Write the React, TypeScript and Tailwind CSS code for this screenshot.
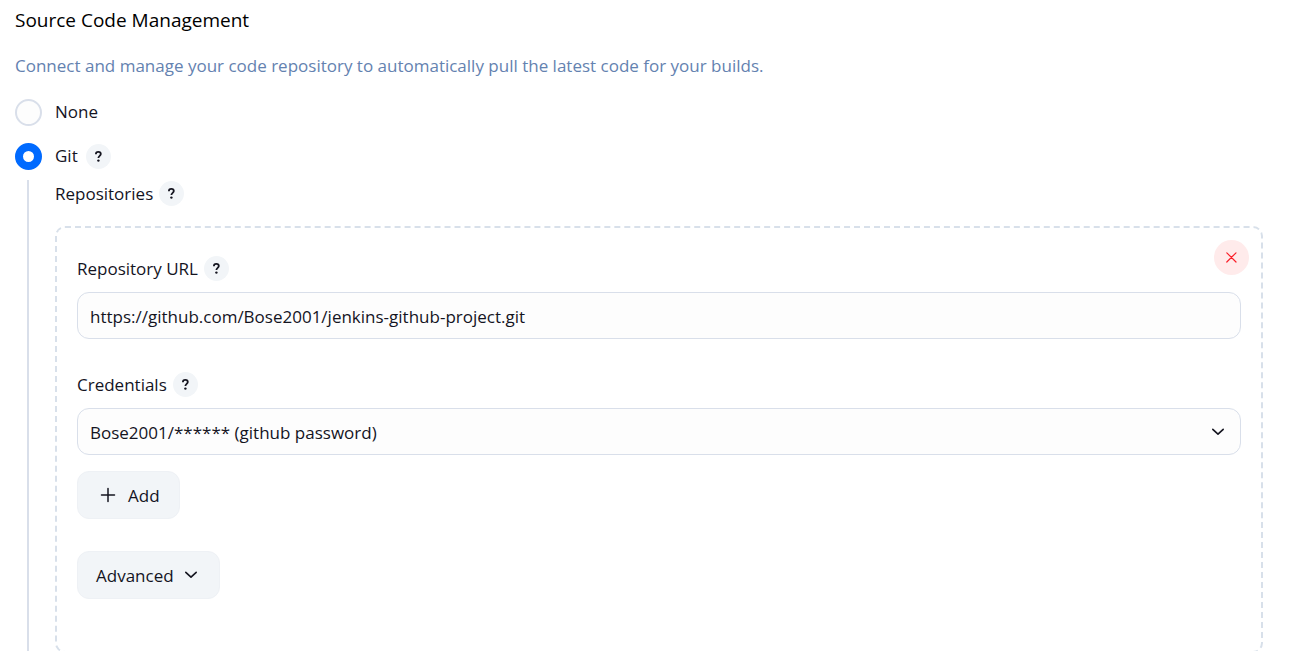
import { useState } from "react";
import type { ReactNode } from "react";

function HelpButton({ label }: { label: string }) {
  return (
    <button
      type="button"
      aria-label={`Help for feature: ${label}`}
      className="flex size-[25px] shrink-0 items-center justify-center rounded-full bg-[#f2f5f8] text-[#14141f]"
    >
      <svg viewBox="0 0 25 25" className="size-[25px]" fill="none" aria-hidden="true">
        <path
          d="M9.9 10.3V10C9.9 8.7 11 7.9 12.3 7.9s2.5.9 2.5 2.2c0 1.8-2.4 1.9-2.4 4"
          stroke="currentColor"
          strokeWidth="1.8"
        />
        <circle cx="12.4" cy="16.6" r="1.2" fill="currentColor" />
      </svg>
    </button>
  );
}

function Chevron({ className }: { className: string }) {
  return (
    <svg viewBox="0 0 14 8" className={className} fill="none" aria-hidden="true">
      <path d="M1.800 1.300 7 6.200l5.200-4.900" stroke="currentColor" strokeWidth="1.600" strokeLinecap="round" strokeLinejoin="round" />
    </svg>
  );
}

function RadioRow({
  id,
  label,
  checked,
  onSelect,
  children,
}: {
  id: string;
  label: string;
  checked: boolean;
  onSelect: () => void;
  children?: ReactNode;
}) {
  return (
    <div className="flex h-7 items-center">
      <input
        id={id}
        type="radio"
        name="scm"
        checked={checked}
        onChange={onSelect}
        className="mr-[13px] size-[27px] shrink-0 appearance-none rounded-full border-2 border-[#d9dfea] bg-[#fdfdfd] checked:border-8 checked:border-[#006aff] checked:bg-white"
      />
      <label htmlFor={id} className="mr-2">
        {label}
      </label>
      {children}
    </div>
  );
}

export default function App() {
  const [scm, setScm] = useState("git");
  const [url, setUrl] = useState("https://github.com/Bose2001/jenkins-github-project.git");

  return (
    <main className="bg-white pr-[27px] pl-[15px] font-['Open_Sans','Noto_Sans',sans-serif] text-[17px] leading-6 text-[#14141f]">
      <h2 className="pt-2 text-[19px] leading-6 text-black">Source Code Management</h2>
      <p className="mt-[22px] text-[#6482b0]">
        Connect and manage your code repository to automatically pull the latest code for your builds.
      </p>

      <div className="mt-5 flex flex-col gap-4">
        <RadioRow id="scm-none" label="None" checked={scm === "none"} onSelect={() => setScm("none")} />
        <RadioRow id="scm-git" label="Git" checked={scm === "git"} onSelect={() => setScm("git")}>
          <HelpButton label="Git" />
        </RadioRow>
      </div>

      <section className="mt-2.5 ml-3 border-l-2 border-[#d9dfea] pb-4 pl-[26px]">
        <div className="flex items-center gap-1.5 pt-px">
          <h3>Repositories</h3>
          <HelpButton label="Repositories" />
        </div>

        <div className="relative mt-5 rounded-[10px] border-2 border-dashed border-[#d8e0ea] px-5 pt-7 pb-[52px]">
          <button
            type="button"
            aria-label="Delete repository"
            className="absolute top-3 right-3 flex size-[35px] items-center justify-center rounded-full bg-[#ffebeb] text-[#fa1e28]"
          >
            <svg viewBox="0 0 11 11" className="size-[11px]" fill="none" aria-hidden="true">
              <path d="m.800.800 9.200 9.200M10 .800.800 10" stroke="currentColor" strokeWidth="1.200" strokeLinecap="round" />
            </svg>
          </button>

          <div className="flex items-center gap-1.5">
            <label htmlFor="repo-url">Repository URL</label>
            <HelpButton label="Repository URL" />
          </div>
          <input
            id="repo-url"
            type="text"
            value={url}
            onChange={(e) => setUrl(e.target.value)}
            className="mt-[11px] block h-[47px] w-full rounded-xl border border-[#d9dfea] bg-[#fdfdfd] px-3 pt-0.5"
          />

          <div className="mt-[33px] flex items-center gap-1.5">
            <label htmlFor="credentials">Credentials</label>
            <HelpButton label="Credentials" />
          </div>
          <div className="mt-[11px] grid items-center">
            <select
              id="credentials"
              className="col-start-1 row-start-1 h-[47px] w-full appearance-none rounded-xl border border-[#d9dfea] bg-[#fdfdfd] px-3 pt-0.5"
            >
              <option>Bose2001/****** (github password)</option>
            </select>
            <Chevron className="pointer-events-none col-start-1 row-start-1 mr-4 h-2 w-3.5 justify-self-end" />
          </div>

          <button
            type="button"
            className="mt-4 flex h-12 items-center gap-3 rounded-xl border border-[#eef1f5] bg-[#f2f5f8] pr-[19px] pl-[22px]"
          >
            <svg viewBox="0 0 16 16" className="size-4" fill="none" aria-hidden="true">
              <path d="M8 1.500v13M1.500 8h13" stroke="currentColor" strokeWidth="1.500" strokeLinecap="round" />
            </svg>
            <span className="pt-0.5">Add</span>
          </button>

          <button
            type="button"
            className="mt-8 flex h-12 items-center gap-2.5 rounded-xl border border-[#eef1f5] bg-[#f2f5f8] pr-[21px] pl-[18px]"
          >
            <span className="pt-0.5">Advanced</span>
            <Chevron className="h-2 w-3.5" />
          </button>
        </div>
      </section>
    </main>
  );
}
